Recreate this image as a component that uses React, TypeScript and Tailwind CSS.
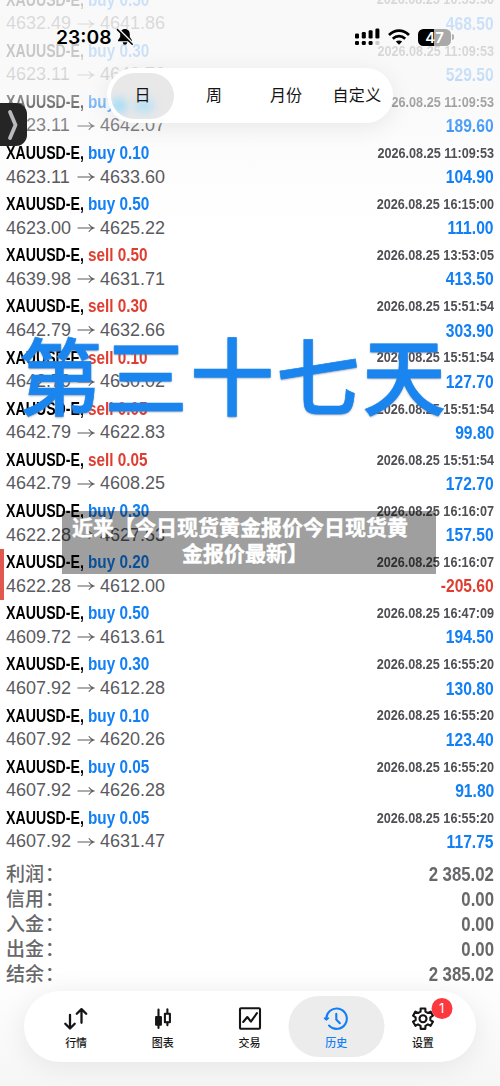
import React from 'react';

interface Deal {
  side: 'buy' | 'sell';
  volume: string;
  open: string;
  close: string;
  time: string;
  profit: string;
}

const deals: Deal[] = [
  { side: 'buy', volume: '0.50', open: '4632.49', close: '4641.86', time: '2026.08.25 10:53:50', profit: '468.50' },
  { side: 'buy', volume: '0.30', open: '4623.11', close: '4640.76', time: '2026.08.25 11:09:53', profit: '529.50' },
  { side: 'buy', volume: '0.10', open: '4623.11', close: '4642.07', time: '2026.08.25 11:09:53', profit: '189.60' },
  { side: 'buy', volume: '0.10', open: '4623.11', close: '4633.60', time: '2026.08.25 11:09:53', profit: '104.90' },
  { side: 'buy', volume: '0.50', open: '4623.00', close: '4625.22', time: '2026.08.25 16:15:00', profit: '111.00' },
  { side: 'sell', volume: '0.50', open: '4639.98', close: '4631.71', time: '2026.08.25 13:53:05', profit: '413.50' },
  { side: 'sell', volume: '0.30', open: '4642.79', close: '4632.66', time: '2026.08.25 15:51:54', profit: '303.90' },
  { side: 'sell', volume: '0.10', open: '4642.79', close: '4630.02', time: '2026.08.25 15:51:54', profit: '127.70' },
  { side: 'sell', volume: '0.05', open: '4642.79', close: '4622.83', time: '2026.08.25 15:51:54', profit: '99.80' },
  { side: 'sell', volume: '0.05', open: '4642.79', close: '4608.25', time: '2026.08.25 15:51:54', profit: '172.70' },
  { side: 'buy', volume: '0.30', open: '4622.28', close: '4627.53', time: '2026.08.25 16:16:07', profit: '157.50' },
  { side: 'buy', volume: '0.20', open: '4622.28', close: '4612.00', time: '2026.08.25 16:16:07', profit: '-205.60' },
  { side: 'buy', volume: '0.50', open: '4609.72', close: '4613.61', time: '2026.08.25 16:47:09', profit: '194.50' },
  { side: 'buy', volume: '0.30', open: '4607.92', close: '4612.28', time: '2026.08.25 16:55:20', profit: '130.80' },
  { side: 'buy', volume: '0.10', open: '4607.92', close: '4620.26', time: '2026.08.25 16:55:20', profit: '123.40' },
  { side: 'buy', volume: '0.05', open: '4607.92', close: '4626.28', time: '2026.08.25 16:55:20', profit: '91.80' },
  { side: 'buy', volume: '0.05', open: '4607.92', close: '4631.47', time: '2026.08.25 16:55:20', profit: '117.75' },
];

const totals = [
  ['利润', '2 385.02'],
  ['信用', '0.00'],
  ['入金', '0.00'],
  ['出金', '0.00'],
  ['结余', '2 385.02'],
];

const DealRow: React.FC<{ deal: Deal }> = ({ deal }) => {
  const loss = deal.profit.startsWith('-');

  return (
    <div className="relative h-[51.15px] shrink-0 pl-1.5 pr-[6px] whitespace-nowrap">
      {loss && <div className="absolute left-0 top-0 h-full w-[3.5px] bg-[#e0584e]" />}
      <div className="flex h-[26px] items-center justify-between font-bold">
        <div className="flex text-[17.5px] leading-[26px]">
          <span className="w-[82px] origin-left scale-x-[0.81] text-black">XAUUSD-E,</span>
          <span className={`origin-left scale-x-[0.875] ${deal.side === 'buy' ? 'text-[#117ff5]' : 'text-[#df3d30]'}`}>
            {deal.side} {deal.volume}
          </span>
        </div>
        <span className="mb-px origin-right scale-x-[0.815] text-[15.5px] text-[#4f4f54]">{deal.time}</span>
      </div>
      <div className="flex h-[22px] items-center justify-between">
        <div className="flex items-center text-[18px] text-[#5a5a60]">
          <span className="w-[71px]">{deal.open}</span>
          <svg className="mr-[5px] h-3 w-[18px]" viewBox="0 0 18 12" fill="none" stroke="currentColor" strokeWidth="1.1">
            <path d="M0.5 6H16.5M11.8 2.2C13 4 14.5 5.4 16.7 6C14.5 6.6 13 8 11.8 9.8" />
          </svg>
          <span>{deal.close}</span>
        </div>
        <span className={`origin-right scale-x-[0.845] text-[18.5px] font-bold ${loss ? 'text-[#df3d30]' : 'text-[#117ff5]'}`}>
          {deal.profit}
        </span>
      </div>
    </div>
  );
};

const StatusBar: React.FC = () => (
  <div className="absolute left-0 top-0 flex h-[74px] w-full items-center pl-14 font-[Inter,sans-serif]">
    <span className="text-[19.3px] font-semibold leading-6 text-black">23:08</span>
    <svg className="ml-1 h-[18px] w-[18px]" viewBox="0 0 18 18">
      <path d="M9 1C5.9 1 4.2 3.3 4.2 6.2V9L2 12.2V13.3H16V12.2L13.8 9V6.2C13.8 3.3 12.1 1 9 1ZM6.7 14.3H11.3C11 16 10.2 16.8 9 16.8S7 16 6.7 14.3Z" fill="#000" />
      <path d="M2.2 1.2L17 15.8" stroke="#f5f5f5" strokeWidth="2.4" />
      <path d="M1.4 1.6L16.2 16.2" stroke="#000" strokeWidth="1.5" strokeLinecap="round" />
    </svg>
    <div className="ml-auto flex items-center pr-[46px]">
      <svg className="h-[18px] w-[26px]" viewBox="0 0 26 18">
        <rect x="1" y="5.5" width="4" height="5" rx="1.3" />
        <rect x="7.8" y="4" width="4" height="6.5" rx="1.3" />
        <rect x="14.6" y="2.3" width="4" height="8.2" rx="1.3" />
        <rect x="21.4" y="0.5" width="4" height="10" rx="1.3" />
        <rect x="1" y="13" width="4" height="4" rx="1.3" />
        <rect x="7.8" y="13" width="4" height="4" rx="1.3" />
        <rect x="14.6" y="13" width="4" height="4" rx="1.3" />
        <rect x="21.4" y="13" width="4" height="4" rx="1.3" fill="#ccc" />
      </svg>
      <svg className="ml-2 h-4 w-[22px]" viewBox="0 0 22 16" fill="none" stroke="#000" strokeWidth="2.7">
        <path d="M1 6C6.8 0.2 15.2 0.2 21 6" />
        <path d="M4.8 9.8C8.4 6.3 13.6 6.3 17.2 9.8" />
        <path d="M11 15.8L7.8 12.6C9.6 11 12.4 11 14.2 12.6Z" fill="#000" stroke="none" />
      </svg>
      <div className="ml-2 flex h-[17px] w-[33px] items-center justify-center rounded-[5.5px] bg-gradient-to-r from-black from-48% to-[#a9a9a9] to-48% text-[15px] font-semibold leading-none text-white">
        47
      </div>
      <div className="ml-px h-1.5 w-[2px] rounded-r-full bg-[#b0b0b0]" />
    </div>
  </div>
);

const PeriodTabs: React.FC = () => (
  <div className="absolute left-[107px] top-[68px] flex h-[55px] w-[286px] items-center rounded-full bg-white/[0.98] px-1 text-[16px] text-[#151515] shadow-[0_4px_24px_rgba(0,0,0,0.08)]">
    <div className="relative flex h-[46px] w-[63px] shrink-0 items-center justify-center overflow-hidden rounded-full bg-[#e8e8e9]">
      <div className="absolute left-0 top-[25px] h-4 w-4 rounded-full bg-[#a5ddf6] blur-[4px]" />
      <div className="absolute right-5 top-[27px] h-3 w-5 rounded-full bg-[#b5e1f5] blur-[4px]" />
      <span className="relative">日</span>
    </div>
    <span className="w-20 shrink-0 text-center">周</span>
    <span className="w-16 shrink-0 text-center">月份</span>
    <span className="w-[78px] shrink-0 text-center tracking-[0.4px]">自定义</span>
  </div>
);

// six-toothed cog outline
const gearPath = (() => {
  const points: string[] = [];
  for (let i = 0; i < 6; i++) {
    [[-19, 7.5], [-13, 10.4], [13, 10.4], [19, 7.5]].forEach(([offset, r]) => {
      const a = ((i * 60 - 90 + offset) * Math.PI) / 180;
      points.push(`${(12.5 + r * Math.cos(a)).toFixed(2)} ${(12.7 + r * Math.sin(a)).toFixed(2)}`);
    });
  }
  return `M${points.join('L')}Z`;
})();

const icons = [
  <path key="q" d="M6.5 8.8V22.2M1.8 17.8L6.5 22.5L11.2 17.8M18 16.8V3.4M13.3 7.8L18 3.1L22.7 7.8" strokeWidth="2.3" />,
  <g key="c" strokeWidth="2.1">
    <path d="M8 3.5V22M16.9 3.3V7M16.9 16.5V19.3" />
    <rect x="5.6" y="11" width="4.8" height="7.8" fill="currentColor" />
    <rect x="14.4" y="7.7" width="5" height="8.5" />
  </g>,
  <g key="t" strokeWidth="2.1">
    <rect x="2.5" y="2.3" width="20" height="20.4" rx="1" />
    <path d="M5.7 16L9.8 11L13.4 15.7L19.4 7.2" />
  </g>,
  <g key="h" strokeWidth="2.1">
    <path d="M2.9 13.2A10.2 10.2 0 1 1 5.6 19.6" />
    <path d="M0.6 12L2.9 14L5.2 12Z" strokeWidth="1.2" fill="currentColor" />
    <path d="M12.8 7.7V13.5L16.3 17.2" />
  </g>,
  <g key="s" strokeWidth="2.1">
    <path d={gearPath} />
    <circle cx="12.5" cy="12.7" r="3.5" />
  </g>,
];

const labels = ['行情', '图表', '交易', '历史', '设置'];

const TabBar: React.FC = () => (
  <div className="absolute left-6 top-[991px] flex h-[71px] w-[452px] justify-center rounded-full bg-white shadow-[0_4px_28px_rgba(0,0,0,0.08)]">
    {labels.map((label, i) => {
      const active = label === '历史';
      return (
        <div key={label} className={`relative flex w-[86.7px] -translate-x-[0.5px] flex-col items-center pt-[15px] ${active ? 'text-[#117ff5]' : 'text-[#151515]'}`}>
          {active && <div className="absolute -left-1 top-[5px] h-[61px] w-[96px] rounded-full bg-[#ececec]" />}
          <svg className="relative h-[25px] w-[25px]" viewBox="0 0 25 25" fill="none" stroke="currentColor" strokeLinecap="round" strokeLinejoin="round">
            {icons[i]}
          </svg>
          <span className="relative mt-1 text-[11px] font-medium leading-4">{label}</span>
          {label === '设置' && (
            <span className="absolute left-[51.5px] top-[7px] flex h-[21px] w-[21px] items-center justify-center rounded-full bg-[#fb393f] text-[13px] font-[Inter,sans-serif] text-white">
              1
            </span>
          )}
        </div>
      );
    })}
  </div>
);

export default function App() {
  return (
    <div className="relative h-[1086px] w-[500px] overflow-hidden bg-white font-['Liberation_Sans','Noto_Sans_CJK_SC',sans-serif]">
      <div className="absolute inset-x-0 top-0 h-[230px] bg-gradient-to-b from-[#f7f7f7] to-white" />
      <div className="absolute inset-x-0 bottom-0 h-[120px] bg-gradient-to-t from-[#f6f6f6] to-white" />

      <div className="relative -mt-[13.4px] flex flex-col">
        {deals.map((deal, i) => (
          <DealRow key={i} deal={deal} />
        ))}
        <div className="mt-[6px] px-1.5 text-[#68686a]">
          {totals.map(([name, value]) => (
            <div key={name} className="flex h-[25px] items-center justify-between">
              <span className="mt-[2px] text-[19px] font-medium">
                {name}
                <span className="ml-px">：</span>
              </span>
              <span className="origin-right scale-x-[0.86] text-[19.5px] font-bold">{value}</span>
            </div>
          ))}
        </div>
      </div>

      {/* fade under the status bar */}
      <div className="absolute inset-x-0 top-0 h-[150px] bg-gradient-to-b from-[#f9f9f9]/80 from-50% via-[#f9f9f9]/50 via-68% to-transparent" />

      <StatusBar />
      <PeriodTabs />

      <div className="absolute -left-4 top-[103px] flex h-[43px] w-[43px] items-center justify-end rounded-[11px] bg-[#252525] pr-2">
        <svg className="h-8 w-3" viewBox="0 0 12 32" fill="none" stroke="#b9b9be" strokeWidth="3.8" strokeLinecap="round" strokeLinejoin="round">
          <path d="M3 3L8.5 16L3 29" />
        </svg>
      </div>

      <div className="absolute left-[18px] top-[313px] whitespace-nowrap font-['Noto_Sans_CJK_SC',sans-serif] text-[84px] font-medium leading-[120px] tracking-[2px] text-[#1a85ee] [-webkit-text-stroke:0.6px_#1a85ee] [text-shadow:0_1px_2px_rgba(90,110,140,0.7)]">
        第三十七天
      </div>

      <div className="absolute left-[62px] top-[511px] h-[63px] w-[374px] whitespace-nowrap bg-black/[0.376] pl-[10px] pt-[2px] font-['Noto_Sans_CJK_SC',sans-serif] text-[21px] font-bold leading-[26px] text-white [-webkit-text-stroke:0.4px_#fff]">
        <p>近来【今日现货黄金报价今日现货黄</p>
        <p className="pl-[110px]">金报价最新】</p>
      </div>

      <TabBar />
    </div>
  );
}
